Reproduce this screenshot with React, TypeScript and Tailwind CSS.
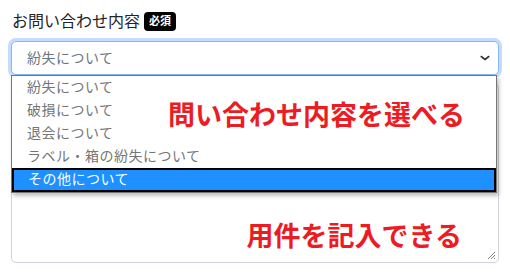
import React from "react";

const items = ["紛失について", "破損について", "退会について", "ラベル・箱の紛失について", "その他について"];

const redText = "text-[27px] leading-[34px] font-bold text-[#eb1c24] whitespace-nowrap";
const sans = { fontFamily: '"Noto Sans CJK JP", sans-serif' };

export default function App() {
  return (
    <div
      className="w-[510px] h-[272px] bg-white overflow-hidden flex flex-col px-[11px] pt-[12px]"
      style={{ fontFamily: '"Liberation Serif", "Noto Sans CJK JP", serif' }}
    >
      <div className="pl-[1px] flex items-center gap-[4px] h-[19px]">
        <span className="text-[16px] leading-[20px] text-[#212529]">お問い合わせ内容</span>
        <span className="bg-black text-white text-[11px] leading-[19px] h-[19px] px-[5px] rounded-[4px] font-bold">必須</span>
      </div>

      <div className="relative mt-[10px] z-10">
        <div className="h-[34px] border border-[#86b7fe] rounded-[5px] shadow-[0_0_0_3px_#c6dcfd] flex items-center justify-between pl-[15px] pr-[6px] bg-white">
          <span className="text-[14px] text-[#6c757d] tracking-[0.5px]">紛失について</span>
          <svg width="12" height="12" viewBox="0 0 16 16" className="mr-[1px]">
            <path d="M3 6l5 4 5-4" fill="none" stroke="#343a40" strokeWidth="2.2" strokeLinecap="round" strokeLinejoin="round" />
          </svg>
        </div>
        <div className="absolute left-0 top-full w-[486px] bg-white border border-[#767676] shadow-[2px_3px_4px_rgba(0,0,0,0.25)] flex flex-col">
          {items.map((t, i) =>
            i === items.length - 1 ? (
              <div
                key={t}
                className="h-[24px] bg-[#1e90ff] border-2 border-black text-white text-[14px] leading-[20px] pl-[14px] tracking-[0.5px]"
              >
                {t}
              </div>
            ) : (
              <div key={t} className="h-[23px] text-[#757575] text-[14px] leading-[23px] pl-[15px] tracking-[0.5px]">
                {t}
              </div>
            )
          )}
          <div className={`absolute left-[156px] top-[21px] ${redText}`} style={sans}>
            問い合わせ内容を選べる
          </div>
        </div>
      </div>

      <div className="mt-[8px] h-[180px] border border-[#ced4da] rounded-[5px] relative flex items-end justify-end pr-[36px] pb-[10px]">
        <div className={redText} style={sans}>
          用件を記入できる
        </div>
        <div className="absolute right-[2px] bottom-[2px]">
          <svg width="9" height="9" viewBox="0 0 9 9">
            <path d="M8 1L1 8M8 4L4 8M8 7L7 8" stroke="#666" strokeWidth="0.8" />
          </svg>
        </div>
      </div>
    </div>
  );
}
